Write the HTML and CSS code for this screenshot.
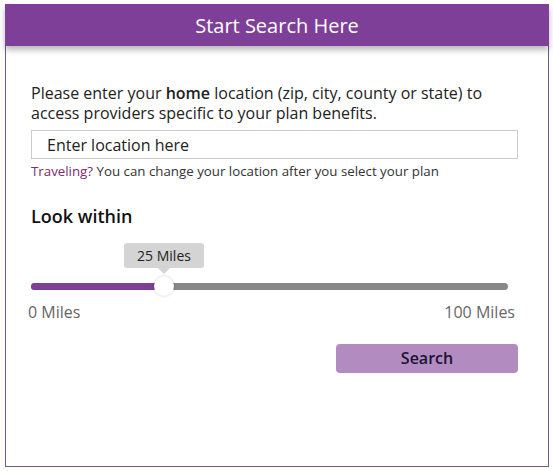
FILE: index.html
```html
<!DOCTYPE html>
<html>
<head>
<meta charset="utf-8">
<link rel="stylesheet" href="styles.css">
</head>
<body>
<div class="card">
  <div class="header">Start Search Here</div>
  <div class="content">
    <p class="intro">Please enter your <b>home</b> location (zip, city, county or state) to access providers specific to your plan benefits.</p>
    <div class="input">Enter location here</div>
    <p class="hint"><span class="travel">Traveling?</span> You can change your location after you select your plan</p>
    <h2 class="within">Look within</h2>
    <div class="slider">
      <div class="tip">25 Miles</div>
      <div class="track"><div class="fill"></div><div class="thumb"></div></div>
    </div>
    <div class="labels"><span>0 Miles</span><span>100 Miles</span></div>
    <div class="actions"><button class="btn">Search</button></div>
  </div>
</div>
</body>
</html>
```
FILE: styles.css
```css
html, body { margin: 0; padding: 0; background: #fff; }
body { font-family: "Open Sans", "Liberation Sans", sans-serif; color: #222; }
.card {
  margin: 4px 0 0 5px;
  width: 542px;
  height: 462px;
  border: 1px solid #735a80;
  border-top: none;
  box-sizing: content-box;
}
.header {
  margin: 0 -1px 0 -1px;
  height: 42px;
  background: #7d3f98;
  color: #fff;
  font-size: 20px;
  line-height: 43px;
  text-align: center;
  box-shadow: 0 4px 6px rgba(0,0,0,0.28);
}
.content { padding: 37px 30px 0 25px; }
.intro { margin: 0; font-size: 16px; line-height: 20px; }
.intro b { font-weight: 600; }
.input {
  margin-top: 7px;
  height: 27px;
  border: 1px solid #ccc;
  padding-left: 15px;
  font-size: 16px;
  line-height: 28px;
  color: #222;
}
.hint { margin: 4px 0 0; font-size: 13.3px; line-height: 17px; color: #333; }
.travel { color: #7b2c6c; }
.within { margin: 24px 0 0; font-size: 18px; font-weight: 600; line-height: 24px; color: #111; }
.slider { position: relative; margin-top: 15px; height: 54px; width: 477px; }
.tip {
  position: absolute; left: 93px; top: 0;
  width: 80px; height: 25px;
  background: #d4d4d4; border-radius: 3px;
  font-size: 14px; line-height: 25px; text-align: center; color: #222;
}
.tip::after {
  content: ""; position: absolute; left: 34px; top: 25px;
  border-left: 6px solid transparent; border-right: 6px solid transparent;
  border-top: 6px solid #d4d4d4;
}
.track {
  position: absolute; left: 0; top: 40px; width: 477px; height: 7px;
  background: #888; border-radius: 4px;
}
.fill { width: 133px; height: 7px; background: #7d3f98; border-radius: 4px 0 0 4px; }
.thumb {
  position: absolute; left: 123px; top: -7px; width: 20px; height: 20px;
  border-radius: 50%; background: #fff; box-shadow: 0 0 3px rgba(0,0,0,0.2);
}
.labels {
  display: flex; justify-content: space-between;
  margin: 4px 3px 0 -3px;
  font-size: 16px; line-height: 22px; color: #666;
}
.actions { display: flex; justify-content: flex-end; margin-top: 21px; }
.btn {
  width: 182px; height: 29px; border: none; border-radius: 4px;
  background: #b28bc0; color: #1b1433;
  font-family: "Open Sans", "Liberation Sans", sans-serif;
  font-size: 16px; font-weight: 600; padding: 0; line-height: 29px;
}
```
